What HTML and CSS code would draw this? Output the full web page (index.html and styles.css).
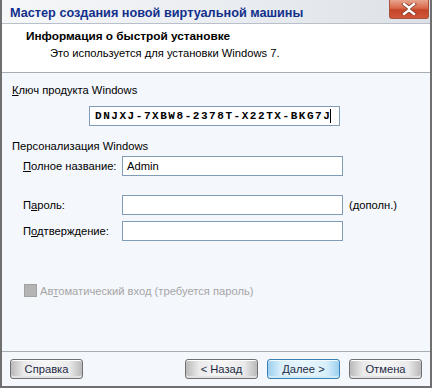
FILE: index.html
```html
<!DOCTYPE html>
<html lang="ru">
<head>
<meta charset="utf-8">
<link rel="stylesheet" href="styles.css">
</head>
<body>
<div class="window">
  <div class="titlebar">
    <span class="title">Мастер создания новой виртуальной машины</span>
    <span class="close">
      <svg width="16" height="12" viewBox="0 0 16 12">
        <path d="M3 1 L8 5 L13 1 M3 11 L8 7 L13 11" fill="none" stroke="#7d3a2a" stroke-width="4" stroke-linecap="square"/>
        <path d="M3 1 L8 5 L13 1 M3 11 L8 7 L13 11 M8 5 L8 7" fill="none" stroke="#ffffff" stroke-width="2.4" stroke-linecap="square"/>
      </svg>
    </span>
  </div>
  <div class="header">
    <div class="h-title">Информация о быстрой установке</div>
    <div class="h-sub">Это используется для установки Windows 7.</div>
  </div>
  <div class="content">
    <div class="label"><u>К</u>люч продукта Windows</div>
    <div class="keybox">DNJXJ-7XBW8-2378T-X22TX-BKG7J<span class="caret"></span></div>
    <div class="label section">Персонализация Windows</div>
    <div class="form">
      <div class="row first">
        <span class="flabel"><u>П</u>олное название:</span>
        <span class="input">Admin</span>
      </div>
      <div class="row second">
        <span class="flabel">П<u>а</u>роль:</span>
        <span class="input"></span>
        <span class="note">(дополн.)</span>
      </div>
      <div class="row third">
        <span class="flabel">П<u>о</u>дтверждение:</span>
        <span class="input"></span>
      </div>
    </div>
    <div class="check">
      <span class="box"></span>
      <span class="ctext">Ав<u>т</u>оматический вход (требуется пароль)</span>
    </div>
  </div>
  <div class="footer">
    <span class="btn">Справка</span>
    <span class="spacer"></span>
    <span class="btn">&lt; Назад</span>
    <span class="btn primary">Далее &gt;</span>
    <span class="btn">Отмена</span>
  </div>
</div>
</body>
</html>
```

FILE: styles.css
```css
html, body {
  margin: 0;
  padding: 0;
  background: #ffffff;
}

body {
  font-family: "Liberation Sans", Arial, sans-serif;
  font-size: 11.2px;
  color: #000000;
}

.window {
  width: 432px;
  height: 388px;
  box-sizing: border-box;
  display: flex;
  flex-direction: column;
  border-left: 2px solid #6f6f6f;
  border-right: 2px solid #6f6f6f;
  border-bottom: 2px solid #6f6f6f;
  box-shadow: inset 1px 0 0 #d9dde3, inset -1px 0 0 #d9dde3, inset 0 -1px 0 #d9dde3;
}

.titlebar {
  height: 23px;
  border-bottom: 1px solid #b9c0ca;
  background: linear-gradient(to right, #f6f7f9 0%, #e9ecf0 55%, #dde1e7 100%);
  display: flex;
  align-items: flex-start;
  justify-content: space-between;
  padding-left: 8px;
}

.title {
  font-weight: bold;
  font-size: 12.7px;
  color: #12308c;
  line-height: 16px;
  margin-top: 5px;
  white-space: nowrap;
}

.close {
  width: 40px;
  height: 19px;
  margin-right: 1px;
  box-sizing: border-box;
  border: 1px solid #a9533e;
  border-top: none;
  border-radius: 0 0 3px 3px;
  background: linear-gradient(to bottom, #e8a58e 0%, #d9694b 45%, #c54428 55%, #d0573a 100%);
  display: flex;
  align-items: center;
  justify-content: center;
}

.header {
  box-sizing: border-box;
  height: 49px;
  background: #ffffff;
  border-bottom: 1px solid #a6adb7;
}

.h-title {
  font-weight: bold;
  font-size: 11.8px;
  margin: 5px 0 0 24px;
  line-height: 14px;
}

.h-sub {
  margin: 3px 0 0 48px;
  line-height: 14px;
}

.content {
  flex: 1;
  background: #f4f7fc;
  padding: 10px 0 0 10px;
}

.label {
  line-height: 15px;
}

.label.section {
  margin-top: 13px;
}

.keybox {
  margin: 8px 0 0 77px;
  width: 251px;
  height: 20px;
  box-sizing: border-box;
  border: 1px solid #7f9db9;
  background: #ffffff;
  font-family: "Liberation Mono", "Courier New", monospace;
  font-weight: bold;
  font-size: 11px;
  letter-spacing: 1.55px;
  line-height: 18px;
  padding-left: 5px;
  white-space: nowrap;
  display: flex;
  align-items: center;
}

.caret {
  display: inline-block;
  width: 1px;
  height: 14px;
  background: #000000;
  margin-left: -1px;
}

.form {
  margin-left: 11px;
  margin-top: 2px;
}

.row {
  display: flex;
  align-items: center;
  height: 20px;
}

.row.second {
  margin-top: 19px;
}

.row.third {
  margin-top: 6px;
}

.flabel {
  width: 99px;
  flex-shrink: 0;
  white-space: nowrap;
}

.input {
  width: 221px;
  height: 20px;
  flex-shrink: 0;
  box-sizing: border-box;
  border: 1px solid #7f9db9;
  background: #ffffff;
  padding-left: 4px;
  line-height: 18px;
}

.note {
  margin-left: 6px;
  white-space: nowrap;
}

.check {
  display: flex;
  align-items: center;
  margin: 43px 0 0 12px;
}

.box {
  width: 13px;
  height: 13px;
  box-sizing: border-box;
  border: 1px solid #a2a2a2;
  background: #b4b4b4;
}

.ctext {
  margin-left: 3px;
  color: #a5a5a5;
}

.footer {
  height: 35px;
  border-top: 1px solid #a6adb7;
  background: #f4f7fc;
  display: flex;
  align-items: flex-start;
  padding: 7px 8px 0 8px;
  box-sizing: border-box;
  gap: 9px;
}

.spacer {
  flex: 1;
}

.btn {
  width: 73px;
  height: 20px;
  box-sizing: border-box;
  border: 1px solid #707070;
  border-radius: 3px;
  background: linear-gradient(to right, #b9b9b9 0%, #eaeaea 18%, #f6f6f6 50%, #eaeaea 82%, #b9b9b9 100%);
  box-shadow: inset 0 1px 0 #ffffff, inset 0 -2px 0 #e2e2e2;
  text-align: center;
  line-height: 18px;
  color: #1d2a45;
}

.btn.primary {
  border-color: #3c7fb1;
  background: linear-gradient(to right, #9cd0ef 0%, #d8effb 18%, #e8f6fd 50%, #d8effb 82%, #9cd0ef 100%);
  box-shadow: inset 0 1px 0 #f4fbff, inset 0 -2px 0 #cfeaf8;
}
```
